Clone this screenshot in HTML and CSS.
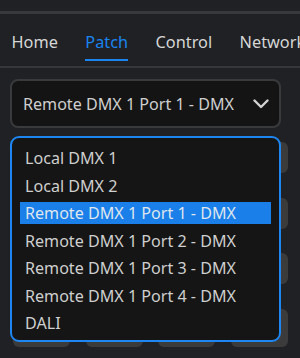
FILE: index.html
```html
<!DOCTYPE html>
<html>
<head>
<meta charset="utf-8">
<link rel="stylesheet" href="styles.css">
</head>
<body>
<div class="app">
  <div class="topbar"></div>
  <div class="rule"></div>
  <nav class="tabs">
    <span class="tab">Home</span>
    <span class="tab active">Patch</span>
    <span class="tab">Control</span>
    <span class="tab">Network</span>
  </nav>
  <div class="sep"></div>
  <main class="content">
    <div class="picker">
      <div class="select">
        <span class="select-text">Remote DMX 1 Port 1 - DMX</span>
        <svg class="chev" width="16" height="10" viewBox="0 0 16 10"><path d="M1.5 1.5 L8 8 L14.5 1.5" fill="none" stroke="#d2d2d2" stroke-width="2.4" stroke-linecap="round" stroke-linejoin="round"/></svg>
      </div>
      <ul class="dropdown">
        <li class="opt">Local DMX 1</li>
        <li class="opt">Local DMX 2</li>
        <li class="opt selected">Remote DMX 1 Port 1 - DMX</li>
        <li class="opt">Remote DMX 1 Port 2 - DMX</li>
        <li class="opt">Remote DMX 1 Port 3 - DMX</li>
        <li class="opt">Remote DMX 1 Port 4 - DMX</li>
        <li class="opt">DALI</li>
      </ul>
    </div>
    <div class="grid">
      <div class="cell"></div><div class="cell"></div><div class="cell"></div><div class="cell"></div>
      <div class="cell"></div><div class="cell"></div><div class="cell"></div><div class="cell"></div>
      <div class="cell"></div><div class="cell"></div><div class="cell"></div><div class="cell"></div>
      <div class="cell"></div><div class="cell"></div><div class="cell"></div><div class="cell"></div>
    </div>
  </main>
</div>
</body>
</html>
```
FILE: styles.css
```css
* { box-sizing: border-box; }
html, body {
  margin: 0;
  padding: 0;
  background: #1f2124;
  width: 300px;
  height: 358px;
  overflow: hidden;
  font-family: "Noto Sans", "Open Sans", sans-serif;
}
.app { width: 300px; }
.topbar { height: 11px; }
.rule { height: 3px; background: #38393c; }
.tabs {
  display: flex;
  gap: 27.5px;
  padding-left: 11.5px;
  height: 52px;
  white-space: nowrap;
  overflow: hidden;
}
.tab {
  font-size: 16.3px;
  line-height: 22px;
  color: #d6d6d6;
  padding-top: 17px;
  padding-bottom: 6px;
  height: 47px;
  border-bottom: 2px solid transparent;
}
.tab.active {
  color: #1a84f0;
  border-bottom-color: #1a84f0;
}
.sep { height: 2px; background: #36373a; }
.content {
  padding: 11px 0 0 10px;
}
.picker {
  position: relative;
  width: 271px;
}
.select {
  height: 49px;
  border: 2px solid #393a3b;
  border-radius: 8px;
  background: #141414;
  display: flex;
  align-items: center;
  justify-content: space-between;
  padding: 0 10px 0 11px;
}
.select-text {
  font-size: 16.1px;
  color: #cfcfcf;
}
.chev { display: block; margin-top: 1px; }
.dropdown {
  position: absolute;
  left: 0;
  top: 57px;
  width: 271px;
  height: 206px;
  margin: 0;
  list-style: none;
  border: 2px solid #1e86f0;
  border-radius: 9px;
  background: #151515;
  padding: 9px 8px 6px 8px;
  display: flex;
  flex-direction: column;
  gap: 5.5px;
  z-index: 2;
}
.opt {
  height: 22px;
  line-height: 22px;
  font-size: 16.1px;
  color: #cfcfcf;
  padding-left: 5px;
}
.opt.selected {
  background: #1a7fe8;
  color: #dfe6ee;
}
.grid {
  margin-top: 14px;
  margin-left: 3px;
  width: 275px;
  display: grid;
  grid-template-columns: repeat(4, 57px);
  grid-template-rows: 31px 31px 31px 38px;
  justify-content: space-between;
  row-gap: 24.5px;
}
.cell {
  background: #3b3b3c;
  border-radius: 6px;
}
```
